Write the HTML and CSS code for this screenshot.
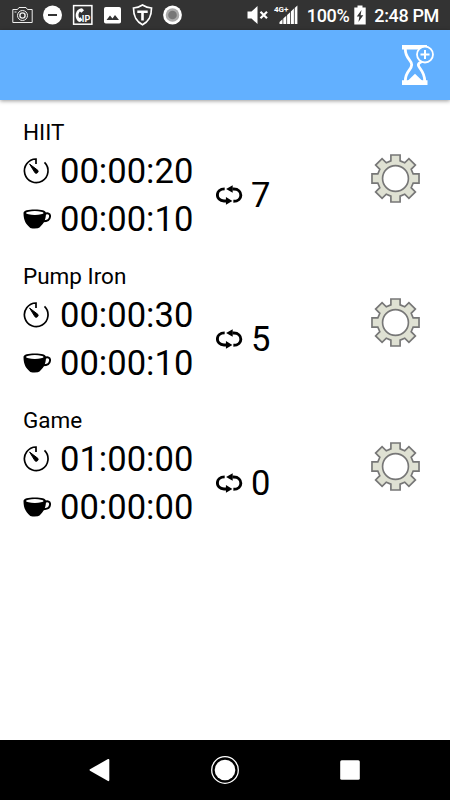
FILE: index.html
```
<!DOCTYPE html>
<html lang="en">

<head>
    <meta charset="UTF-8">
    <meta name="viewport" content="width=device-width, initial-scale=1.0">
    <title>Interval Timer</title>
    <link rel="stylesheet" href="styles.css">
</head>

<body>

    <!-- shared icons -->
    <svg class="icon-defs">
        <symbol id="timer" viewBox="0 0 28 28">
            <path d="M22.5 5.4A11.8 11.8 0 1 1 14 2V7" fill="none" stroke="#000" stroke-width="1.7" />
            <path d="M7.6 7.1L15.8 13.3A1.9 1.9 0 0 1 13 15.8Z" stroke="#000" stroke-width="1" />
        </symbol>
        <symbol id="cup" viewBox="0 0 28 20">
            <path d="M.5 4C.5 1.5 5 .5 11.8 .5S23 1.5 23 4C23 12 19.5 15.5 16.5 18.5Q15.5 19.5 11.5 19.5T6.8 18.5C3.5 15.5 .5 12 .5 4Z" />
            <ellipse cx="11.8" cy="4" rx="8.8" ry="1.9" fill="#fff" />
            <path d="M21.5 5.3C24.5 3.3 27.5 4.5 27 7.8C26.7 10.8 24 12.3 19.5 12.2" fill="none" stroke="#000" stroke-width="1.9" />
        </symbol>
        <symbol id="repeat" viewBox="0 0 28 20">
            <path d="M9 3.7C-1.2 3.7-.7 16.2 8.3 16.2H11M18 16.5C28.5 16.5 28 3.8 18.5 3.8H17" fill="none" stroke="#000" stroke-width="3" />
            <path d="M10.3 12.2L17 16.2L10.3 20ZM17.3 0V7.6L10.5 3.8Z" />
        </symbol>
        <symbol id="gear" viewBox="-25 -25 50 50">
            <path d="M-4.7-24H4.7V-18L9.4-16L13.7-20.3L20.3-13.7L16-9.4L18-4.7H24V4.7H18L16 9.4L20.3 13.7L13.7 20.3L9.4 16L4.7 18V24H-4.7V18L-9.4 16L-13.7 20.3L-20.3 13.7L-16 9.4L-18 4.7H-24V-4.7H-18L-16-9.4L-20.3-13.7L-13.7-20.3L-9.4-16L-4.7-18Z" fill="#dfe1d3" stroke="#777" stroke-width="1.7" />
            <circle r="13.2" fill="#fff" stroke="#777" stroke-width="1.7" />
        </symbol>
    </svg>

    <div class="status-bar">
        <div class="notifications">
            <svg width="21" height="22" viewBox="0 0 21 22" fill="none" stroke="#eee">
                <path d="M.8 5.5H5.5L7 3.5H14L15.5 5.5H20.2V18.5H.8Z" />
                <circle cx="10.5" cy="11.5" r="5" />
                <circle cx="10.5" cy="11.5" r="2.6" stroke-width="1.4" />
                <path d="M2.5 8H4.5" />
            </svg>
            <svg width="21" height="22" viewBox="0 0 21 22">
                <circle cx="10.5" cy="11" r="9.5" fill="#fff" />
                <path d="M6 11H15" stroke="#333" stroke-width="2" />
            </svg>
            <svg width="21" height="22" viewBox="0 0 21 22">
                <rect x="1.6" y="1.6" width="18.3" height="18.6" fill="none" stroke="#fff" stroke-width="1.5" />
                <path d="M12 6.2L10 4.2C1.5 5 2.5 17 8 18L10.5 16L8.5 13.2L7.2 14C6 12 6.3 9.2 7.8 7.6L9.5 8.7Z" fill="#fff" />
                <text class="ip-label" x="9.8" y="18">IP</text>
            </svg>
            <svg width="21" height="22" viewBox="0 0 21 22">
                <rect x="2" y="3" width="17" height="16.5" rx="1.8" fill="#fff" />
                <path d="M4.5 16L8 11.6L10.5 14.5L13 11L17 16Z" fill="#333" />
            </svg>
            <svg width="21" height="22" viewBox="0 0 21 22" fill="none" stroke="#fff">
                <path d="M10.5 1C7.5 3 4.5 3.8 1.5 4C1.5 12 3.5 17 10.5 20.8C17.5 17 19.5 12 19.5 4C16.5 3.8 13.5 3 10.5 1Z" stroke-width="1.7" />
                <path d="M5.3 7.7H15.7M10.5 7.7V16.5" stroke-width="2.6" />
            </svg>
            <svg width="21" height="22" viewBox="0 0 21 22">
                <circle cx="10.5" cy="11" r="9.4" fill="#fff" />
                <circle cx="10.5" cy="11" r="6.8" fill="#aaa" />
                <circle cx="10.5" cy="11" r="4.3" fill="#777" />
            </svg>
        </div>
        <div class="system">
            <svg width="22" height="22" viewBox="0 0 22 22">
                <path d="M.5 7.5H4.5L10.5 2V20L4.5 14.5H.5Z" fill="#fff" />
                <path d="M13.5 7.7L20 14.3M20 7.7L13.5 14.3" stroke="#fff" stroke-width="2.2" />
            </svg>
            <svg class="signal" width="24" height="22" viewBox="0 0 24 22">
                <path d="M4.5 20V18L7.5 15.3V20ZM8.3 20V14.4L11.3 11.7V20ZM12.1 20V10.9L15.1 8.2V20ZM15.9 20V7.4L18.9 4.6V20ZM19.7 20V3.9L22.4 1.5V20Z" fill="#fff" />
                <text class="network-label" x="-1" y="8">4G+</text>
            </svg>
            <span class="battery-level">100%</span>
            <svg class="battery" width="12" height="22" viewBox="0 0 12 22">
                <path d="M.3 3.5H3.5V1.5H8.5V3.5H11.7V20.5H.3Z" fill="#fff" />
                <path d="M7.5 6L2.8 12.6H5.4L4.4 18L9.3 11.2H6.6Z" fill="#333" />
            </svg>
            <span>2:48 PM</span>
        </div>
    </div>

    <header class="app-bar">
        <svg width="34" height="42" viewBox="0 0 34 42" fill="none" stroke="#fff">
            <path d="M1 1H26V5.5H1ZM1 36.3H26.5V41H1Z" fill="#fff" stroke="none" />
            <path d="M4.3 5C4.3 15 10.7 15.5 10.7 20.8S4.3 27 4.3 37M23.3 16C21.5 18 17.3 18 17.3 21S23.7 27 23.7 37" stroke-width="2.8" />
            <path d="M6.5 37L14 29.8L21.5 37Z" fill="#fff" stroke="none" />
            <circle cx="24" cy="10.5" r="8" fill="#62b0ff" stroke-width="1.8" />
            <path d="M24 6V15M19.5 10.5H28.5" stroke-width="2" />
        </svg>
    </header>

    <main class="timer-list">
        <section class="timer">
            <div class="name">HIIT</div>
            <div class="details">
                <div class="times">
                    <div class="time"><svg class="timer-icon"><use href="#timer" /></svg>00:00:20</div>
                    <div class="time"><svg class="cup-icon"><use href="#cup" /></svg>00:00:10</div>
                </div>
                <div class="repeats"><svg class="repeat-icon"><use href="#repeat" /></svg>7</div>
                <svg class="settings"><use href="#gear" /></svg>
            </div>
        </section>
        <section class="timer">
            <div class="name">Pump Iron</div>
            <div class="details">
                <div class="times">
                    <div class="time"><svg class="timer-icon"><use href="#timer" /></svg>00:00:30</div>
                    <div class="time"><svg class="cup-icon"><use href="#cup" /></svg>00:00:10</div>
                </div>
                <div class="repeats"><svg class="repeat-icon"><use href="#repeat" /></svg>5</div>
                <svg class="settings"><use href="#gear" /></svg>
            </div>
        </section>
        <section class="timer">
            <div class="name">Game</div>
            <div class="details">
                <div class="times">
                    <div class="time"><svg class="timer-icon"><use href="#timer" /></svg>01:00:00</div>
                    <div class="time"><svg class="cup-icon"><use href="#cup" /></svg>00:00:00</div>
                </div>
                <div class="repeats"><svg class="repeat-icon"><use href="#repeat" /></svg>0</div>
                <svg class="settings"><use href="#gear" /></svg>
            </div>
        </section>
    </main>

    <nav class="nav-bar">
        <svg width="28" height="28" viewBox="0 0 28 28">
            <path d="M4 13.3L22 3Q23.3 2.5 23.3 4V24Q23.3 25.5 22 25L4 14.7Q3 14 4 13.3Z" fill="#fff" />
        </svg>
        <svg width="28" height="28" viewBox="0 0 28 28">
            <circle cx="14" cy="14" r="13.3" fill="none" stroke="#fff" stroke-width="1.3" />
            <circle cx="14" cy="14" r="10.3" fill="#fff" />
        </svg>
        <svg width="28" height="28" viewBox="0 0 28 28">
            <rect x="4.2" y="4.2" width="19.6" height="19.6" rx="1.5" fill="#fff" />
        </svg>
    </nav>

</body>

</html>
```
FILE: styles.css
```
body {
    margin: 0;
    height: 800px;
    display: flex;
    flex-direction: column;
    overflow: hidden;
    background-color: white;
    color: black;
    font-family: Roboto, 'Liberation Sans', sans-serif;
}

svg {
    display: block;
    flex: none;
}

.icon-defs {
    display: none;
}

.status-bar {
    display: flex;
    justify-content: space-between;
    box-sizing: border-box;
    height: 30px;
    padding: 4px 11px 0 12px;
    background-color: #333;
    color: white;
}

.notifications {
    display: flex;
    gap: 9px;
}

.system {
    display: flex;
    font-size: 18px;
    font-weight: 500;
    letter-spacing: -0.35px;
    line-height: 24px;
    white-space: nowrap;
}

.signal {
    margin: 0 8px 0 6px;
    overflow: visible;
}

.battery {
    margin: 0 8px 0 5px;
}

.ip-label {
    font-size: 9px;
    font-weight: bold;
    fill: white;
}

.network-label {
    font-size: 8px;
    font-weight: bold;
    letter-spacing: 0;
    fill: white;
    stroke: #333;
    stroke-width: 1.5px;
    paint-order: stroke;
}

.app-bar {
    display: flex;
    align-items: center;
    justify-content: flex-end;
    box-sizing: border-box;
    height: 70px;
    padding-right: 15px;
    background-color: #62b0ff;
    box-shadow: 0 1px 4px rgba(0, 0, 0, 0.4);
}

.timer-list {
    flex: 1;
    padding: 17px 29px 0 23px;
}

.timer {
    margin-bottom: 19px;
}

.name {
    font-size: 22.5px;
    line-height: 30px;
}

.details {
    display: flex;
    height: 95px;
    font-size: 34.6px;
}

.times {
    width: 193px;
}

.time {
    display: flex;
    align-items: center;
    box-sizing: border-box;
    height: 47.5px;
    padding-top: 1px;
}

.timer-icon {
    width: 28px;
    height: 28px;
    margin: 0 10px 0 -1px;
}

.cup-icon {
    width: 28px;
    height: 20px;
    margin-right: 9px;
}

.repeats {
    display: flex;
    align-items: center;
    box-sizing: border-box;
    flex: 1;
    padding-top: 1px;
}

.repeat-icon {
    width: 27px;
    height: 20px;
    margin: 0 8px 1px 0;
}

.settings {
    width: 49px;
    height: 49px;
    margin: 7px 1px 0 0;
}

.nav-bar {
    display: flex;
    align-items: center;
    justify-content: space-between;
    height: 60px;
    padding: 0 86px;
    background-color: black;
}
```
